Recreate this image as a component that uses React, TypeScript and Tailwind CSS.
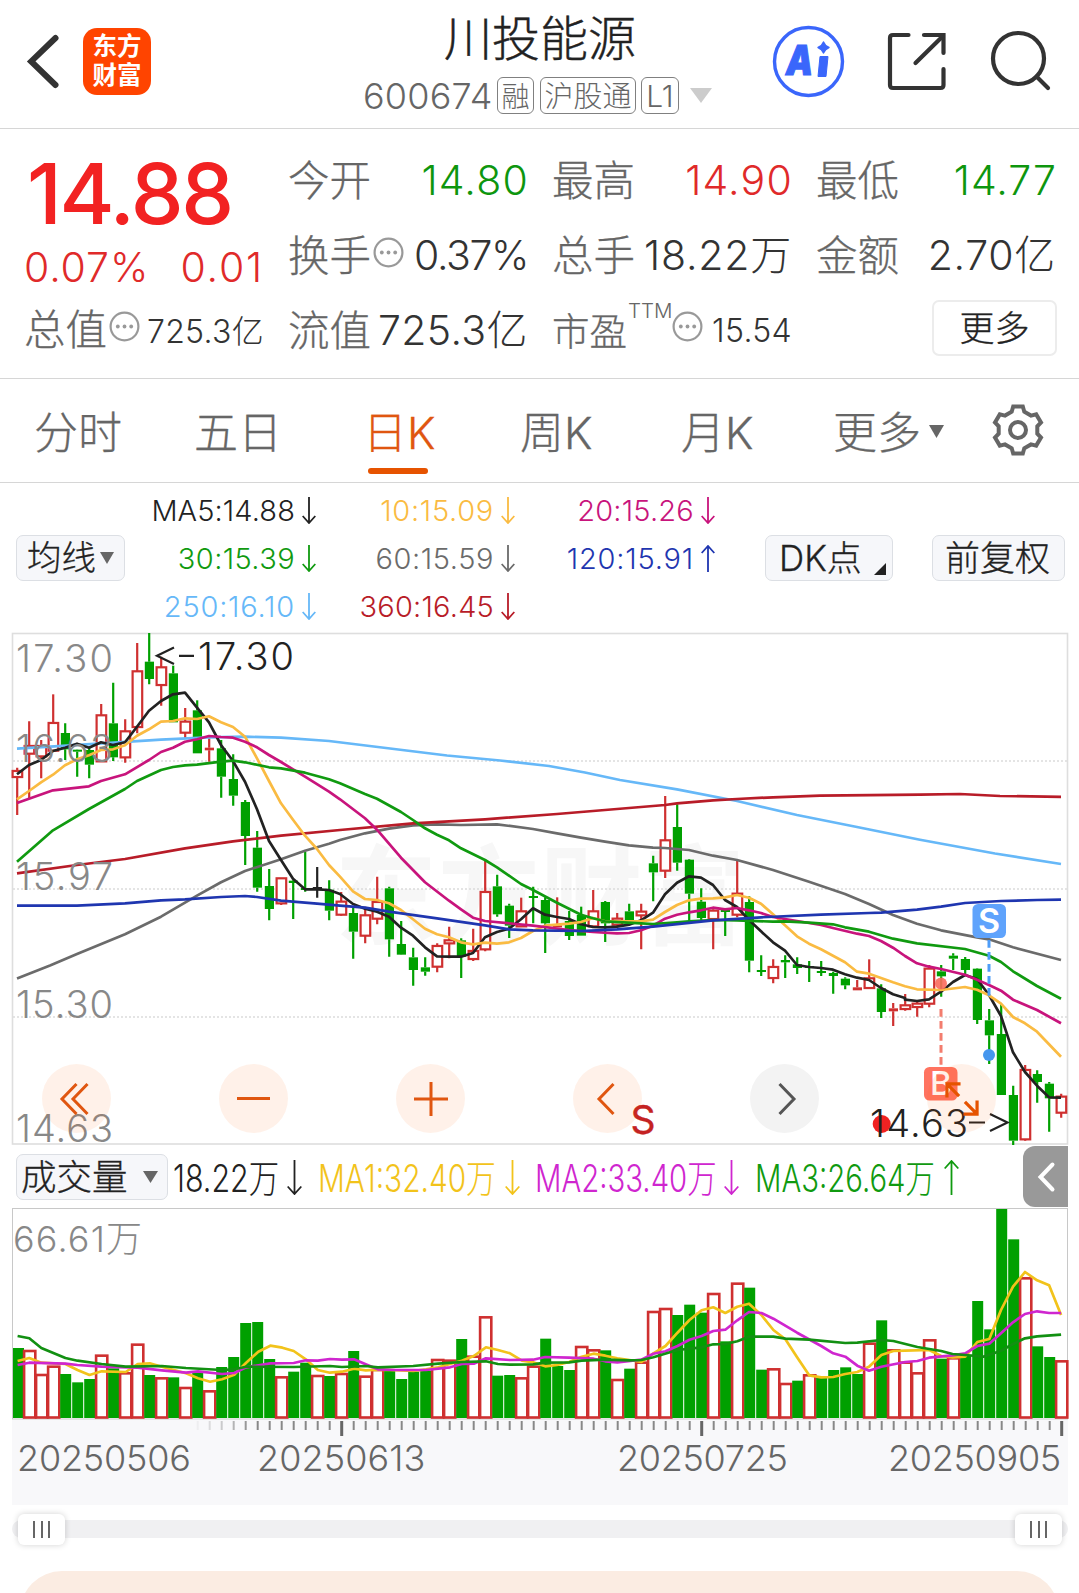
import React from "react";

type Pt = [number, number];

const GREEN = "#00a000";
const RED = "#cf3030";

/* ---------- chart data ---------- */

const xAt = (i: number) => 17.2 + 12 * i;

// Candles: [kind, high, bodyTop, bodyBottom, low], in thirds of a pixel from the block's base line.
type Candle = ["r" | "g" | "k", number, number, number, number];

const candleBlocks: { base: number; start: number; rows: Candle[] }[] = [
  {
    base: 625,
    start: 0,
    rows: [
      ["r", 428, 437, 457, 570], ["r", 289, 362, 387, 520], ["r", 345, 362, 395, 460], ["r", 208, 293, 378, 378],
      ["g", 295, 324, 373, 405], ["g", 375, 374, 380, 455], ["g", 365, 375, 419, 460], ["r", 237, 270, 410, 410],
      ["g", 173, 295, 397, 408], ["r", 283, 318, 398, 413], ["r", 54, 138, 307, 325], ["g", 24, 110, 162, 178],
      ["r", 95, 126, 181, 242], ["g", 122, 145, 292, 292], ["r", 249, 289, 324, 340], ["g", 226, 256, 385, 385],
      ["r", 340, 368, 376, 410], ["g", 345, 370, 455, 518], ["g", 388, 462, 512, 542], ["g", 525, 531, 633, 720],
      ["g", 618, 668, 788, 800], ["g", 732, 783, 852, 886], ["r", 759, 759, 836, 840], ["g", 765, 767, 774, 882],
      ["g", 680, 789, 795, 800], ["k", 726, 786, 792, 818], ["g", 766, 794, 857, 886], ["r", 801, 829, 870, 872],
      ["g", 848, 864, 920, 1001],
    ],
  },
  {
    base: 780,
    start: 29,
    rows: [
      ["r", 380, 405, 468, 490], ["r", 290, 365, 417, 433], ["g", 320, 325, 478, 530], ["g", 423, 492, 524, 525],
      ["g", 503, 532, 570, 617], ["g", 532, 562, 575, 587], ["r", 490, 497, 561, 577], ["r", 440, 480, 491, 535],
      ["g", 475, 481, 530, 594], ["r", 446, 512, 538, 543], ["r", 242, 335, 509, 514], ["g", 284, 319, 403, 410],
      ["g", 371, 377, 437, 474], ["r", 353, 393, 440, 440], ["g", 320, 348, 353, 430], ["g", 352, 360, 430, 519],
      ["r", 352, 436, 441, 441], ["g", 393, 423, 468, 480], ["g", 380, 405, 467, 467], ["r", 330, 393, 440, 437],
      ["g", 363, 366, 430, 486], ["r", 399, 415, 435, 440], ["g", 371, 394, 428, 430], ["r", 371, 394, 407, 508],
      ["g", 227, 250, 277, 364], ["r", 48, 180, 273, 294], ["g", 73, 141, 248, 272], ["g", 237, 239, 341, 428],
      ["g", 325, 365, 414, 420], ["r", 388, 391, 418, 508], ["g", 385, 390, 394, 468], ["r", 242, 340, 405, 412],
      ["g", 349, 366, 542, 577], ["g", 526, 570, 575, 588], ["r", 538, 560, 595, 610], ["g", 526, 540, 547, 594],
      ["g", 532, 553, 564, 582], ["g", 543, 558, 562, 606], ["g", 543, 573, 579, 588], ["g", 575, 579, 588, 641],
      ["g", 592, 596, 616, 628], ["r", 600, 622, 631, 628], ["r", 538, 594, 625, 625], ["g", 613, 625, 696, 714],
      ["r", 669, 685, 694, 738], ["r", 642, 675, 688, 692],
    ],
  },
  {
    base: 880,
    start: 75,
    rows: [
      ["r", 366, 370, 382, 410], ["r", 255, 265, 372, 382], ["g", 255, 274, 289, 350], ["g", 220, 227, 236, 270],
      ["g", 231, 237, 270, 285], ["g", 265, 266, 420, 432], ["g", 387, 421, 466, 552], ["g", 372, 462, 645, 645],
      ["g", 617, 645, 782, 795], ["r", 555, 569, 779, 782], ["g", 571, 582, 606, 668], ["g", 606, 611, 655, 755],
      ["r", 641, 649, 699, 713],
    ],
  },
];

// Expands a flat list of x,y values drawn at a given origin and scale.
const part = (ox: number, oy: number, sx: number, v: number[]): Pt[] => {
  const out: Pt[] = [];
  for (let i = 0; i < v.length; i += 2) out.push([ox + v[i] / sx, oy + v[i + 1] / 3]);
  return out;
};
const a = (...v: number[]) => part(0, 625, 3, v);
const b = (...v: number[]) => part(340, 780, 3, v);
const c = (...v: number[]) => part(620, 780, 3, v);
const d = (...v: number[]) => part(800, 880, 3, v);
const px = (...v: number[]) => part(0, 0, 1, v.map((n, i) => (i % 2 ? n * 3 : n)));

const averages: { color: string; pts: Pt[] }[] = [
  {
    color: "#6b6b6b",
    pts: [
      ...px(17, 978.5, 50, 965.5),
      ...a(231, 987, 375, 928, 483, 875, 591, 812, 663, 772, 735, 738, 843, 703, 915, 677, 987, 656),
      ...b(0, 180, 75, 160, 147, 146, 219, 136, 291, 133, 363, 135, 471, 133, 579, 147, 651, 160, 723, 173, 795, 185, 867, 196, 939, 203, 975, 204, 1047, 210),
      ...c(279, 227, 351, 240, 459, 270, 567, 305, 675, 342, 747, 372, 819, 405, 891, 431),
      ...d(423, 151, 531, 172, 567, 178, 639, 202, 783, 240),
    ],
  },
  {
    color: "#66b8f8",
    pts: [
      ...a(51, 371, 200, 362, 483, 344, 627, 337, 735, 335, 843, 338, 987, 348),
      ...px(386, 748, 447, 755.5, 500, 760.5, 549, 766, 585, 772.5),
      ...c(0, 0, 171, 28, 351, 63, 531, 105, 711, 141, 900, 179),
      ...px(995, 853.5, 1061, 864),
    ],
  },
  {
    color: "#b81c28",
    pts: [
      ...a(51, 745, 231, 720, 375, 702, 555, 670, 699, 649, 843, 632, 1020, 615),
      ...b(0, 150, 219, 130, 435, 118, 651, 102, 867, 84, 975, 75),
      ...c(171, 70, 279, 61, 351, 57, 459, 52, 600, 47, 900, 44),
      ...px(960, 794, 1000, 796, 1061, 796.8),
    ],
  },
  {
    color: "#222222",
    pts: [
      ...a(51, 448, 87, 420, 123, 405, 159, 378, 195, 368, 231, 356, 267, 368, 303, 352, 339, 360, 375, 352, 411, 305, 447, 257, 483, 228, 519, 208, 555, 203, 591, 248, 627, 292, 663, 360, 699, 408, 735, 470, 771, 553, 807, 648, 843, 705, 879, 761, 915, 793, 951, 793, 987, 795),
      ...b(0, 342, 39, 372, 75, 386, 111, 395, 147, 410, 183, 443, 219, 467, 255, 502, 291, 529, 327, 530, 363, 530, 399, 519, 435, 472, 471, 456, 507, 446, 543, 418, 579, 385, 615, 404, 651, 411, 687, 417, 723, 433, 759, 441, 795, 442, 831, 440, 867, 434, 903, 421, 939, 398, 975, 343, 1011, 308, 1047, 289, 1083, 293),
      ...c(279, 315, 315, 360, 351, 381, 387, 420, 423, 454, 459, 487, 495, 512, 531, 555, 567, 561, 603, 564, 639, 569, 675, 583, 711, 593, 747, 600, 783, 624, 819, 643, 855, 654),
      ...d(315, 359, 351, 363, 387, 358, 423, 335, 459, 306, 495, 285, 531, 297, 567, 345, 603, 408, 639, 517, 675, 576, 711, 617, 747, 652, 783, 653),
    ],
  },
  {
    color: "#fabb42",
    pts: [
      ...a(51, 523, 87, 498, 123, 472, 159, 449, 195, 421, 231, 403, 267, 391, 303, 375, 339, 373, 375, 361, 411, 332, 447, 313, 483, 290, 519, 288, 555, 280, 591, 282, 627, 274, 663, 292, 699, 306, 735, 335, 771, 400, 807, 468, 843, 535, 879, 584, 915, 632, 951, 672, 987, 720),
      ...b(0, 290, 39, 334, 75, 357, 111, 360, 147, 370, 183, 390, 219, 418, 255, 446, 291, 463, 327, 472, 363, 487, 399, 493, 435, 488, 471, 491, 507, 487, 543, 474, 579, 453, 615, 437, 651, 434, 687, 431, 723, 426, 759, 414, 795, 424, 903, 424, 939, 419, 975, 396, 1011, 375, 1047, 361),
      ...c(243, 356, 279, 355, 315, 352, 351, 345, 387, 353, 423, 371, 459, 403, 495, 436, 531, 469, 567, 491, 603, 508, 639, 527, 675, 547, 711, 575, 747, 581, 783, 594, 819, 607, 855, 619),
      ...d(351, 328, 423, 330, 495, 321, 531, 329, 567, 346, 603, 371, 639, 411, 675, 430, 711, 455, 747, 493, 783, 530),
    ],
  },
  {
    color: "#c8147c",
    pts: [
      ...a(51, 534, 159, 496, 267, 484, 303, 468, 375, 448, 447, 405, 483, 381, 519, 368, 555, 350, 591, 343, 627, 333, 663, 336, 699, 338, 735, 350, 771, 367, 807, 390, 843, 411, 915, 455, 987, 500),
      ...b(0, 58, 75, 115, 111, 149, 183, 233, 255, 307, 327, 362, 363, 388, 399, 413, 435, 423, 579, 437, 687, 450, 759, 456, 831, 460, 867, 459, 903, 451, 939, 437, 975, 416, 1011, 404, 1047, 397),
      ...c(243, 391, 279, 383, 315, 388, 351, 384, 387, 391, 423, 399, 459, 411, 531, 423, 603, 435, 639, 444, 711, 461, 747, 468),
      ...d(243, 183, 279, 203, 315, 228, 351, 250, 387, 260, 423, 267, 495, 284, 531, 299, 567, 315, 603, 332, 639, 359, 711, 390, 783, 430),
    ],
  },
  {
    color: "#109a10",
    pts: [
      ...a(51, 710, 159, 616, 267, 552, 375, 492, 411, 468, 483, 435, 519, 426, 555, 421, 591, 419, 663, 410, 699, 407, 735, 412, 807, 427, 843, 430, 915, 443, 987, 463),
      ...b(0, 10, 75, 42, 111, 56, 183, 96, 219, 120, 255, 145, 291, 164, 327, 181, 363, 205, 435, 240, 471, 262, 543, 312, 579, 330, 651, 368, 723, 404, 759, 415, 795, 424, 903, 430, 939, 432, 1011, 427),
      ...c(207, 424, 279, 420, 351, 421, 459, 425, 495, 424, 567, 428, 639, 433, 675, 442, 747, 455),
      ...d(279, 176, 351, 190, 495, 207, 567, 227, 603, 246, 639, 274, 711, 318, 783, 356),
    ],
  },
  {
    color: "#1f36b0",
    pts: [
      ...a(51, 842, 231, 842, 375, 835, 483, 826, 555, 823, 663, 816, 735, 813, 771, 816, 843, 827, 951, 836),
      ...b(0, 377, 75, 383, 147, 395, 291, 415, 435, 436, 507, 448, 579, 451, 723, 453, 831, 448, 939, 440, 1083, 425),
      ...c(279, 421, 423, 412, 603, 404, 747, 399),
      ...d(243, 98, 351, 89, 423, 80, 495, 69, 603, 63, 711, 60, 783, 59),
    ],
  },
];

// Volume bars: kind followed by the bar's top, in thirds of a pixel.
const volumeBlocks: { base: number; start: number; rows: string }[] = [
  {
    base: 1200,
    start: 0,
    rows:
      "g444 r453 r525 r500 g522 g547 g537 r467 g505 r520 r434 g525 r535 g532 r564 g516 r574 g501 g471 g369 g366 g477 r532 g515 g488 r528 g528 r522 g453 r530 r510 g512 g537 g515 g512 r480 r482 g417 r470 r352 g527 g525 r535 r500",
  },
  {
    base: 1140,
    start: 44,
    rows:
      "g596 g678 g690 r621 r631 g631 r720 g686 r668 r516 r507 g525 g494 g518 r462 g604 r431 g443 g689 r688 r732 g722 r706 g712 g690 g682 g702 r611 g541 r631 r668 r700 r601 g656 r655 g645 g483 g568 g207 g298 r415 g619 g651 r664",
  },
];

const e = (...v: number[]) => part(0, 1200, 2.904, v);
const f = (...v: number[]) => part(540, 1140, 2.909, v);

const volumeAverages: { color: string; pts: Pt[] }[] = [
  {
    color: "#f2c31b",
    pts: [
      ...e(51, 483, 85, 474, 120, 488, 155, 490, 190, 492, 225, 510, 260, 525, 295, 514, 365, 516, 400, 492, 435, 490, 470, 500, 505, 510, 540, 520, 575, 535, 610, 545, 645, 538, 680, 524, 715, 488, 750, 455, 785, 437, 820, 443, 853, 453, 888, 478, 923, 510, 958, 518, 993, 515, 1028, 506, 1062, 511, 1097, 509, 1132, 510, 1200, 513, 1237, 508, 1272, 502, 1307, 492, 1341, 482, 1376, 468, 1411, 442, 1446, 450, 1481, 460, 1516, 482, 1548, 487),
      ...f(15, 679, 50, 675, 85, 666, 121, 650, 156, 641, 190, 647, 225, 655, 260, 660, 295, 666, 330, 640, 365, 618, 400, 578, 435, 540, 470, 511, 504, 502, 539, 519, 574, 500, 608, 491, 644, 525, 679, 570, 714, 598, 748, 652, 783, 706, 818, 712, 853, 711, 888, 702, 923, 696, 957, 680, 993, 645, 1028, 633, 1062, 632, 1132, 630, 1167, 648, 1200, 652, 1237, 650, 1272, 606, 1307, 597, 1341, 510, 1376, 440, 1411, 396, 1446, 421, 1481, 436, 1516, 525),
    ],
  },
  {
    color: "#cf26cf",
    pts: [
      ...e(51, 495, 85, 488, 190, 491, 225, 495, 295, 500, 400, 503, 470, 511, 540, 518, 575, 514, 645, 522, 680, 519, 715, 502, 785, 490, 853, 489, 888, 481, 923, 482, 958, 477, 993, 479, 1028, 478, 1062, 493, 1097, 508, 1150, 510, 1237, 510, 1307, 502, 1341, 492, 1376, 491, 1411, 475, 1481, 480, 1548, 479),
      ...f(15, 651, 85, 653, 156, 656, 190, 664, 225, 667, 295, 659, 330, 641, 365, 634, 400, 618, 435, 599, 470, 588, 504, 573, 539, 569, 574, 541, 608, 516, 644, 519, 679, 536, 748, 578, 818, 618, 853, 640, 888, 650, 923, 677, 957, 692, 993, 680, 1062, 666, 1098, 663, 1132, 653, 1200, 646, 1237, 640, 1272, 618, 1307, 611, 1341, 580, 1376, 547, 1411, 522, 1446, 514, 1481, 519, 1516, 519),
    ],
  },
  {
    color: "#129012",
    pts: [
      ...e(51, 408, 85, 415, 120, 444, 190, 474, 225, 482, 295, 492, 365, 500, 470, 498, 540, 504, 645, 510, 680, 508, 715, 500, 853, 501, 958, 498, 993, 501, 1062, 498, 1097, 502, 1200, 498, 1272, 491, 1341, 486, 1411, 484, 1446, 492, 1481, 494, 1548, 493),
      ...f(15, 668, 85, 667, 121, 662, 190, 659, 260, 661, 295, 660, 330, 652, 400, 630, 470, 622, 504, 613, 539, 612, 574, 604, 608, 590, 679, 590, 714, 596, 783, 599, 888, 609, 923, 608, 993, 600, 1028, 603, 1098, 621, 1167, 633, 1200, 642, 1237, 645, 1290, 650, 1341, 632, 1376, 612, 1411, 595, 1446, 589, 1516, 584),
    ],
  },
];

const line = (pts: Pt[]) => pts.map(([x, y]) => `${x.toFixed(1)},${y.toFixed(1)}`).join(" ");

/* ---------- small pieces ---------- */

function Triangle({ w, h, color }: { w: number; h: number; color: string }) {
  return (
    <svg width={w} height={h} viewBox="0 0 10 10" preserveAspectRatio="none" className="shrink-0">
      <path d="M0 0H10L5 10Z" fill={color} />
    </svg>
  );
}

function Arrow({ up, w = 14, h = 27 }: { up?: boolean; w?: number; h?: number }) {
  return (
    <svg width={w} height={h} viewBox={`0 0 ${w} ${h}`} fill="none" stroke="currentColor" strokeWidth="1.8" className="shrink-0">
      {up ? (
        <path d={`M${w / 2} ${h}V1M0.7 ${w / 2 + 1}L${w / 2} 1L${w - 0.7} ${w / 2 + 1}`} />
      ) : (
        <path d={`M${w / 2} 0V${h - 1}M0.7 ${h - w / 2 - 1}L${w / 2} ${h - 1}L${w - 0.7} ${h - w / 2 - 1}`} />
      )}
    </svg>
  );
}

function Info() {
  return (
    <svg width="31" height="31" viewBox="0 0 31 31" className="shrink-0">
      <circle cx="15.5" cy="15.5" r="13.9" fill="none" stroke="#999" strokeWidth="2.2" />
      <circle cx="8.8" cy="15.5" r="1.9" fill="#999" />
      <circle cx="15.5" cy="15.5" r="1.9" fill="#999" />
      <circle cx="22.2" cy="15.5" r="1.9" fill="#999" />
    </svg>
  );
}

function Header() {
  return (
    <header className="relative flex h-[129px] w-full shrink-0 items-start border-b border-[#d6d6d6]">
      <svg width="34" height="62" viewBox="0 0 34 62" className="ml-[26px] mt-[30px]" fill="none" stroke="#333" strokeWidth="6" strokeLinecap="round" strokeLinejoin="miter">
        <path d="M29.5 8L5.2 31.4L29.5 55" />
      </svg>
      <div className="ml-[23px] mt-[28px] flex h-[67px] w-[68px] flex-col items-center justify-center rounded-[14px] bg-[#ff4400] pb-[2px] text-[24.5px] font-bold leading-[29px] text-white">
        <span>东方</span>
        <span>财富</span>
      </div>
      <div className="absolute left-[340px] top-0 flex w-[400px] flex-col items-center">
        <h1 className="mt-[10px] text-[48px] font-light leading-[58px] text-[#222] [-webkit-text-stroke:0.4px]">川投能源</h1>
      </div>
      <div className="absolute left-[363px] top-[77px] flex h-[37px] items-center font-light text-[#666]">
        <span className="w-[134px] text-[36px] leading-none tracking-[0.2px]">600674</span>
        <span className="mr-[6px] flex h-[37px] w-[37px] items-center justify-center rounded-[6px] border border-[#808080] pt-[2px] text-[28px] leading-none">融</span>
        <span className="mr-[5px] flex h-[37px] w-[96px] items-center justify-center rounded-[6px] border border-[#808080] pt-[2px] text-[29px] leading-none">沪股通</span>
        <span className="mr-[11px] flex h-[37px] w-[38px] items-center justify-center rounded-[6px] border border-[#808080] text-[30px] leading-none">L1</span>
        <Triangle w={22} h={15} color="#ccc" />
      </div>
      <div className="ml-auto mr-[26px] mt-[25px] flex items-start">
        <svg width="73" height="73" viewBox="0 0 73 73">
          <circle cx="36.500" cy="36.500" r="34" fill="none" stroke="#3a66fb" strokeWidth="3.400" />
          <text x="14" y="50" fontSize="41" fontWeight="900" fontStyle="italic" fill="#3a66fb" stroke="#3a66fb" strokeWidth="1.2" textLength="27" lengthAdjust="spacingAndGlyphs">A</text>
          <path d="M48 31.500H56L54 51.5H46Z" fill="#3a66fb" strokeLinejoin="round" stroke="#3a66fb" strokeWidth="1" />
          <path d="M51.500 17Q53 21 57 22.500Q53 24 51.500 28Q50 24 46 22.500Q50 21 51.500 17Z" fill="#3a66fb" stroke="#3a66fb" strokeWidth="1.400" strokeLinejoin="round" />
        </svg>
        <svg width="62" height="62" viewBox="886 31 62 62" className="ml-[41px] mt-[6px]" fill="none" stroke="#333" strokeWidth="4.200" strokeLinecap="round">
          <path d="M908.500 35H893Q890 35 890 38V85Q890 88 893 88H940.500Q943.500 88 943.500 85V69" />
          <path d="M924 35H943.500V53" />
          <path d="M943 36L915.500 63" />
        </svg>
        <svg width="64" height="64" viewBox="989 29 64 64" className="ml-[41px] mt-[4px]" fill="none" stroke="#333" strokeWidth="4.200" strokeLinecap="round">
          <circle cx="1018.500" cy="58.500" r="25.500" />
          <path d="M1036.500 76.500L1048 88" />
        </svg>
      </div>
    </header>
  );
}

const label = "flex items-center text-[#666] font-light [-webkit-text-stroke:0.3px]";

function Cell({ name, value, color, info }: { name: string; value: string; color: string; info?: boolean }) {
  return (
    <div className="flex h-[46px] items-center justify-between whitespace-nowrap leading-none">
      <span className={`${label} pt-[4px] text-[41.5px]`}>
        {name}
        {info && <span className="-mt-[10px] ml-[2px] flex"><Info /></span>}
      </span>
      <span className={`pt-px text-[41px] font-light ${color}`}>{value}</span>
    </div>
  );
}

function Quote() {
  return (
    <section className="grid h-[250px] w-full shrink-0 grid-cols-[240px_240px_240px_240px] gap-x-[24px] border-b border-[#d6d6d6] pl-[24px] pt-[28px]">
      <div>
        <div className="ml-[3px] mt-[6px] h-[81px] text-[84px] font-medium leading-[62px] tracking-[-2.3px] text-[#f22222]">14.88</div>
        <div className="flex h-[46px] items-center justify-between text-[41px] font-light leading-none text-[#e02a2a]">
          <span className="tracking-[0.9px]">0.07%</span>
          <span className="tracking-[1.8px]">0.01</span>
        </div>
        <div className="mt-[17px] flex h-[46px] items-center justify-between whitespace-nowrap leading-none">
          <span className={`${label} pt-px text-[41.5px]`}>
            总值
            <span className="-mt-[8px] ml-[2px] flex"><Info /></span>
          </span>
          <span className="pt-[3px] text-[32px] font-light tracking-[0.3px] text-[#333]">725.3亿</span>
        </div>
      </div>
      <div className="flex flex-col gap-[29px]">
        <Cell name="今开" value="14.80" color="text-[#0e960e] tracking-[1.2px] -mr-[1px]" />
        <Cell name="换手" value="0.37%" color="text-[#333] tracking-[-1.4px]" info />
        <Cell name="流值" value="725.3亿" color="text-[#333] tracking-[0.4px]" />
      </div>
      <div className="flex flex-col gap-[29px]">
        <Cell name="最高" value="14.90" color="text-[#e02a2a] tracking-[1.2px] -mr-[1px]" />
        <Cell name="总手" value="18.22万" color="text-[#333] tracking-[0.8px]" />
        <div className="flex h-[46px] items-center justify-between whitespace-nowrap font-light leading-none">
          <span className={`${label} pt-[3px] text-[37.5px]`}>
            市盈
            <span className="-mt-[40px] ml-[1px] text-[20.5px] [-webkit-text-stroke:0px]">TTM</span>
            <span className="-ml-px -mt-[10px] flex"><Info /></span>
          </span>
          <span className="mt-[2px] text-[32px] tracking-[0.3px] text-[#333]">15.54</span>
        </div>
      </div>
      <div className="flex flex-col gap-[29px]">
        <Cell name="最低" value="14.77" color="text-[#0e960e] tracking-[1px] -mr-[1px]" />
        <Cell name="金额" value="2.70亿" color="text-[#333] tracking-[0.7px]" />
        <button className="-mr-px -mt-[7px] flex h-[56px] w-[125px] items-center justify-center self-end rounded-[7px] border-2 border-[#ececec] text-[35px] font-light leading-none text-[#222] [-webkit-text-stroke:0.3px]">更多</button>
      </div>
    </section>
  );
}

function Tabs() {
  return (
    <nav className="flex h-[104px] w-full shrink-0 items-center border-b border-[#d6d6d6] pt-[4px] text-[44px] font-light leading-none text-[#666] [-webkit-text-stroke:0.3px]">
      <span className="ml-[34px] w-[160px]">分时</span>
      <span className="w-[169px]">五日</span>
      <span className="relative w-[157px] text-[#e05610]">
        日K
        <span className="absolute left-[5px] top-[57px] h-[6px] w-[60px] rounded-full bg-[#e65300]" />
      </span>
      <span className="w-[161px]">周K</span>
      <span className="w-[152px]">月K</span>
      <span className="flex items-center">
        更多
        <span className="-mt-[3px] ml-[8px]"><Triangle w={15} h={13} color="#666" /></span>
      </span>
      <svg width="52" height="54" viewBox="-26 -27 52 54" className="-mt-[5px] ml-[48px]" fill="none" stroke="#666" strokeWidth="4">
        <path d="M-4.800 -23.500H4.800L6.300 -18.300L13 -14.400L18.200 -15.600L23 -7.600L19.300 -3.700V3.700L23 7.600L18.200 15.600L13 14.400L6.300 18.300L4.800 23.500H-4.800L-6.300 18.300L-13 14.400L-18.200 15.600L-23 7.600L-19.300 3.700V-3.700L-23 -7.600L-18.200 -15.600L-13 -14.400L-6.300 -18.300Z" />
        <circle r="8" />
      </svg>
    </nav>
  );
}

const maCells = [
  { t: "MA5:14.88", color: "text-[#222] tracking-[0.1px]" },
  { t: "10:15.09", color: "text-[#fabb42] tracking-[0.7px]" },
  { t: "20:15.26", color: "text-[#c8147c] tracking-[0.2px]" },
  { t: "30:15.39", color: "text-[#109a10] tracking-[0.4px]" },
  { t: "60:15.59", color: "text-[#6b6b6b] tracking-[0.6px]" },
  { t: "120:15.91", color: "text-[#1f36b0] tracking-[0.8px]", up: true },
  { t: "250:16.10", color: "text-[#66b8f8] tracking-[0.8px]" },
  { t: "360:16.45", color: "text-[#b81c28] tracking-[0.2px]" },
];

const chip = "flex h-[46px] items-center rounded-[7px] border border-[#dcdfe4] bg-[#f6f7fa] pt-[2px] font-light leading-none text-[#222] [-webkit-text-stroke:0.3px]";

function Averages() {
  return (
    <section className="flex h-[150px] w-full shrink-0 items-center">
      <div className={`${chip} -mt-px ml-[16px] w-[109px] justify-center gap-[4px] text-[34.5px]`}>
        均线
        <span className="-mt-[2px]"><Triangle w={14} h={12} color="#666" /></span>
      </div>
      <div className="-ml-[8px] grid grid-cols-[199px_199px_200px] pt-[1px]">
        {maCells.map((m) => (
          <div key={m.t} className={`flex h-[48px] items-center justify-end gap-[7px] text-[29px] font-light leading-none ${m.color}`}>
            <span>{m.t}</span>
            <Arrow up={m.up} />
          </div>
        ))}
      </div>
      <div className={`${chip} relative -mt-px ml-[50px] w-[128px] pl-[13px] text-[35px]`}>
        DK点
        <svg width="12" height="12" viewBox="0 0 12 12" className="absolute bottom-[5px] right-[6px]">
          <path d="M12 0V12H0Z" fill="#222" />
        </svg>
      </div>
      <div className={`${chip} -mt-px ml-[39px] w-[133px] justify-center pr-[2px] text-[35px]`}>前复权</div>
    </section>
  );
}

const labels = [
  { t: "17.30", y: 672 },
  { t: "16.63", y: 762 },
  { t: "15.97", y: 890 },
  { t: "15.30", y: 1018 },
  { t: "14.63", y: 1142 },
];

const round = "flex h-[69px] w-[69px] items-center justify-center rounded-full";

function KChart() {
  return (
    <section className="relative h-[512px] w-full shrink-0">
      <svg width="1079" height="514" viewBox="0 633 1079 514" className="block overflow-visible">
        <rect x="12.500" y="633.500" width="1055" height="510.500" fill="none" stroke="#dedede" strokeWidth="1.600" />
        <text x="335" y="926" fontSize="102" fontWeight="700" fill="#f7f7f7" textLength="410" transform="translate(0 -46) scale(1 1.06)">东方财富</text>
        {[761, 889, 1017].map((y) => (
          <path key={y} d={`M13 ${y}H1067`} stroke="#dcdcdc" strokeWidth="1.500" strokeDasharray="2 2" />
        ))}
        {candleBlocks.flatMap(({ base, start, rows }) =>
          rows.map(([k, hi, top, bot, lo], n) => {
            const x = xAt(start + n);
            const y = (v: number) => base + v / 3;
            const col = k === "r" ? RED : k === "g" ? GREEN : "#222";
            const hollow = k === "r" && bot - top > 10;
            return (
              <g key={start + n}>
                <path d={`M${x} ${y(hi)}V${y(top)}M${x} ${y(bot)}V${Math.max(y(lo), y(bot))}`} stroke={col} strokeWidth="2.200" />
                {hollow ? (
                  <rect x={x - 4.600} y={y(top) + 0.300} width="9.600" height={y(bot) - y(top) - 0.600} fill="white" stroke={col} strokeWidth="2.200" />
                ) : (
                  <rect x={x - 4.400} y={y(top)} width="9.200" height={Math.max(y(bot) - y(top), 2)} fill={col} />
                )}
              </g>
            );
          }),
        )}
        {averages.map((m) => (
          <polyline key={m.color} points={line(m.pts)} fill="none" stroke={m.color} strokeWidth="2.700" strokeLinejoin="round" />
        ))}
        <g fontSize="38" fontWeight="300" fill="#888">
          {labels.map((l) => (
            <text key={l.t} x="16" y={l.y} textLength="97">{l.t}</text>
          ))}
        </g>
        <g fontSize="38" fontWeight="300" fill="#222">
          <path d="M174 647.500L157 655.800L174 664M179 655.800H194" fill="none" stroke="#222" strokeWidth="2.200" />
          <text x="198" y="670" textLength="96">17.30</text>
        </g>
        <path d="M941 1009V1066" stroke="#f37d6e" strokeWidth="3" strokeDasharray="7.700 4.300" />
        <circle cx="941" cy="983.500" r="6" fill="#fb6a5c" fillOpacity=".9" />
        <rect x="924" y="1067" width="33.500" height="33.500" rx="5.500" fill="#ff7360" />
        <text x="940.800" y="1095" fontSize="33" fontWeight="500" fill="white" textAnchor="middle">B</text>
        <path d="M989 940V997" stroke="#4e9df8" strokeWidth="3" strokeDasharray="7.700 4.300" />
        <circle cx="989" cy="1055" r="6" fill="#4596ee" />
        <rect x="972.500" y="904" width="33.500" height="34" rx="5.500" fill="#5fa3fc" />
        <text x="989" y="933" fontSize="34" fontWeight="600" fill="white" textAnchor="middle">S</text>
        <circle cx="881.700" cy="1124" r="9" fill="#f02222" />
        <text x="643" y="1133.500" fontSize="39" fontWeight="400" fill="#c42222" stroke="#c42222" strokeWidth="0.400" textAnchor="middle">S</text>
        <text x="870" y="1137" fontSize="38" fontWeight="300" fill="#222" textLength="98">14.63</text>
        <path d="M969 1122.500H985M990 1114L1007.500 1122.500L990 1131" fill="none" stroke="#222" strokeWidth="2.200" />
      </svg>
      <div className="absolute left-[42px] top-[431px] flex gap-[108px]">
        <span className={`${round} bg-[#fc6010]/9`}>
          <svg width="30" height="34" viewBox="0 0 30 34" className="-ml-[6px]" fill="none" stroke="#e05610" strokeWidth="3">
            <path d="M17.500 2L3 17L17.500 32M28.500 2L14 17L28.500 32" />
          </svg>
        </span>
        <span className={`${round} bg-[#fc6010]/9`}>
          <span className="h-[3px] w-[33px] bg-[#e05610]" />
        </span>
        <span className={`${round} bg-[#fc6010]/9`}>
          <svg width="34" height="34" viewBox="0 0 34 34" stroke="#e05610" strokeWidth="3">
            <path d="M0 17H34M17 0V34" />
          </svg>
        </span>
        <span className={`${round} bg-[#fc6010]/9`}>
          <svg width="20" height="34" viewBox="0 0 20 34" className="-ml-[4px]" fill="none" stroke="#e05610" strokeWidth="3">
            <path d="M17.500 2L3 17L17.500 32" />
          </svg>
        </span>
        <span className={`${round} bg-[#f3f3f3]`}>
          <svg width="20" height="34" viewBox="0 0 20 34" className="ml-[4px]" fill="none" stroke="#555" strokeWidth="3">
            <path d="M2.500 2L17 17L2.500 32" />
          </svg>
        </span>
        <span className={`${round} bg-[#fc6010]/9`}>
          <svg width="34" height="34" viewBox="944 1081 35 35" fill="none" stroke="#e65300" strokeWidth="3.300">
            <path d="M960 1083H946V1097M946 1083L958.500 1095.500M963 1114H977V1100M977 1114L964.500 1101.500" />
          </svg>
        </span>
      </div>
    </section>
  );
}

function VolumeHeader() {
  const item = "flex items-center";
  const text = "block origin-left whitespace-nowrap text-[38px] font-light leading-none";
  return (
    <section className="relative flex h-[63px] w-full shrink-0 items-center">
      <div className={`${chip} ml-[16px] w-[152px] justify-between pl-[4px] pr-[9px] text-[35.5px]`}>
        成交量
        <span className="-mt-[2px]"><Triangle w={15} h={12} color="#666" /></span>
      </div>
      <div className={`${item} ml-[5px] w-[145px] pt-[2px] text-[#222]`}>
        <span className="w-[114px]"><span className={`${text} scale-x-[0.8]`}>18.22万</span></span>
        <Arrow w={15} h={35} />
      </div>
      <div className={`${item} w-[217px] pt-[2px] text-[#f2c31b]`}>
        <span className="w-[187px]"><span className={`${text} scale-x-[0.785]`}>MA1:32.40万</span></span>
        <Arrow w={15} h={35} />
      </div>
      <div className={`${item} w-[220px] pt-[2px] text-[#cf26cf]`}>
        <span className="w-[189px]"><span className={`${text} scale-x-[0.772]`}>MA2:33.40万</span></span>
        <Arrow w={15} h={35} />
      </div>
      <div className={`${item} pt-[2px] text-[#109a10]`}>
        <span className="w-[189px]"><span className={`${text} scale-x-[0.772]`}>MA3:26.64万</span></span>
        <Arrow up w={15} h={35} />
      </div>
      <div className="absolute left-[1023px] top-[1px] flex h-[61px] w-[45px] items-center justify-center rounded-l-[12px] bg-[#999]">
        <svg width="20" height="32" viewBox="0 0 20 32" fill="none" stroke="white" strokeWidth="4" strokeLinecap="round">
          <path d="M16.500 3.500L4.500 16L16.500 28.500" />
        </svg>
      </div>
    </section>
  );
}

function VolumeChart() {
  const floor = 1417.5;
  return (
    <section className="h-[212px] w-full shrink-0">
      <svg width="1079" height="212" viewBox="0 1208 1079 212" className="block">
        <rect x="12.500" y="1208.500" width="1055" height="210.500" fill="none" stroke="#c8c8c8" />
        {volumeBlocks.flatMap(({ base, start, rows }) =>
          rows.split(" ").map((r, n) => {
            const x = xAt(start + n) + 0.500;
            const y = base + Number(r.slice(1)) / 3;
            return r[0] === "g" ? (
              <rect key={start + n} x={Math.max(x - 5.500, 13)} y={y} width="11" height={floor + 0.500 - y} fill={GREEN} />
            ) : (
              <rect key={start + n} x={x - 5.600} y={y} width="11.200" height={floor - y} fill="white" stroke={RED} strokeWidth="2.600" />
            );
          }),
        )}
        {volumeAverages.map((m) => (
          <polyline key={m.color} points={line(m.pts)} fill="none" stroke={m.color} strokeWidth="2.700" strokeLinejoin="round" />
        ))}
        <text x="13" y="1252" fontSize="36" fontWeight="300" fill="#888" textLength="129">66.61万</text>
      </svg>
    </section>
  );
}

function Axis() {
  const fade = [0.08, 0.25, 0.4, 0.6, 0.85];
  return (
    <section className="ml-[12px] h-[85px] w-[1056px] shrink-0 bg-[#f8f8fa]">
      <svg width="1056" height="17" viewBox="12 1420 1056 17" className="block">
        {Array.from({ length: 73 }, (_, n) => {
          const major = n === 12 || n === 42 || n === 72;
          return (
            <path
              key={n}
              d={`M${xAt(n + 15) + 0.500} 1421V${major ? 1436 : 1430}`}
              stroke={major ? "#666" : "#888"}
              strokeWidth={major ? 3 : 2}
              opacity={fade[n] ?? 1}
            />
          );
        })}
      </svg>
      <div className="flex pt-[3px] text-[36px] font-light leading-[36px] text-[#666]">
        <span className="ml-[5px] w-[240px] tracking-[-0.2px]">20250506</span>
        <span className="w-[360px] tracking-[0.1px]">20250613</span>
        <span className="w-[271px] tracking-[-0.3px]">20250725</span>
        <span className="tracking-[-0.3px]">20250905</span>
      </div>
    </section>
  );
}

function Handle() {
  return (
    <span className="flex h-[31px] w-[47px] items-center justify-center gap-[5.5px] rounded-[6px] bg-white shadow-[0_0_6px_rgba(0,0,0,0.18)]">
      <i className="h-[17px] w-[2px] bg-[#666]" />
      <i className="h-[17px] w-[2px] bg-[#666]" />
      <i className="h-[17px] w-[2px] bg-[#666]" />
    </span>
  );
}

export default function App() {
  return (
    <main className="flex h-[1593px] w-[1079px] flex-col overflow-hidden bg-white font-['Inter','Noto_Sans_CJK_SC',sans-serif]">
      <Header />
      <Quote />
      <Tabs />
      <Averages />
      <KChart />
      <VolumeHeader />
      <VolumeChart />
      <Axis />
      <div className="ml-[12px] mt-[15px] flex h-[18px] w-[1056px] shrink-0 items-center justify-between rounded-full bg-[#f0f0f2] px-[6px]">
        <Handle />
        <Handle />
      </div>
      <div className="ml-[20px] mt-[33px] h-[84px] w-[1039px] shrink-0 rounded-full bg-[#fbece2]" />
    </main>
  );
}
